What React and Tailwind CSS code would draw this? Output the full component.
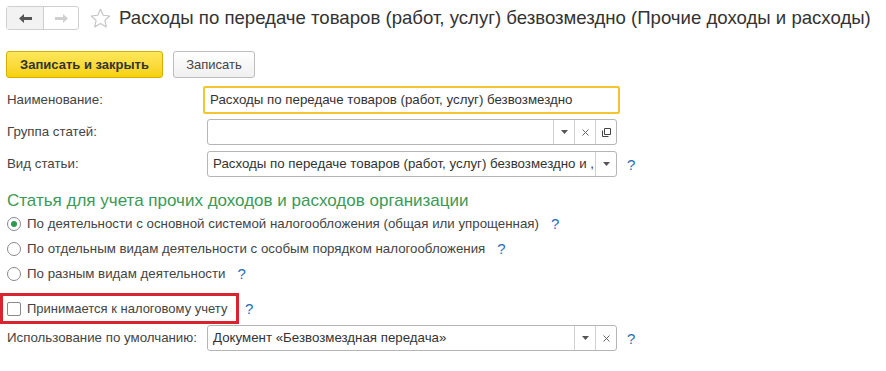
import React from 'react';

const Help = ({ className = '' }) => (
  <span className={`text-[15px] text-[#2a6db5] leading-none ${className}`}>?</span>
);

const Caret = () => (
  <svg width="7" height="4" viewBox="0 0 7 4"><path d="M0 0h7L3.5 4z" fill="#555" /></svg>
);

const Cross = () => (
  <svg width="7" height="7" viewBox="0 0 7 7"><path d="M0.5 0.5l6 6M6.5 0.5l-6 6" stroke="#666" strokeWidth="1" /></svg>
);

const OpenIcon = () => (
  <svg width="11" height="11" viewBox="0 0 11 11" fill="none" stroke="#444" strokeWidth="1">
    <path d="M3.5 1.5h6v6h-6z" />
    <path d="M1.5 3.5v6h6" />
  </svg>
);

function Field({ text = '', buttons = [] }) {
  return (
    <div className="flex h-[26px] w-[410px] rounded-[3px] border border-[#b5b5b5] bg-white">
      <div className="flex-1 overflow-hidden whitespace-nowrap px-[5px] text-[13.3px] leading-[24px] text-[#333]">{text}</div>
      {buttons.map((b, i) => (
        <div key={i} className="flex w-[21px] items-center justify-center border-l border-[#d0d0d0]">
          {b === 'caret' && <Caret />}
          {b === 'x' && <Cross />}
          {b === 'open' && <OpenIcon />}
        </div>
      ))}
    </div>
  );
}

function Radio({ checked, label }) {
  return (
    <div className="flex h-[25px] items-center pl-[7px]">
      <span className="flex h-[14px] w-[14px] items-center justify-center rounded-full border border-[#8a8a8a] bg-white">
        {checked && <span className="h-[6px] w-[6px] rounded-full bg-[#2e9a4f]" />}
      </span>
      <span className="ml-[6px] text-[13.3px] text-[#444]">{label}</span>
      <Help className="ml-[12px]" />
    </div>
  );
}

export default function App() {
  return (
    <div className="h-[371px] w-[886px] overflow-hidden bg-white font-['Liberation_Sans',Arial,sans-serif] text-[#444]">
      {/* header */}
      <div className="flex items-center pl-[6px] pt-[6px]">
        <div className="flex h-[24px] shrink-0 rounded-[3px] border border-[#cfcfcf] bg-white">
          <div className="flex w-[37px] items-center justify-center border-r border-[#cfcfcf] bg-[#f2f2f2]">
            <svg width="13" height="9" viewBox="0 0 13 9"><path d="M0 4.5L5 0v3h8v3H5v3z" fill="#555" /></svg>
          </div>
          <div className="flex w-[34px] items-center justify-center">
            <svg width="13" height="9" viewBox="0 0 13 9"><path d="M13 4.5L8 0v3H0v3h8v3z" fill="#cfcfcf" /></svg>
          </div>
        </div>
        <svg className="ml-[11px] shrink-0" width="21" height="21" viewBox="0 0 20 20">
          <path d="M10 1.2l2.6 5.7 6.2.7-4.6 4.2 1.3 6.2-5.5-3.2-5.5 3.2 1.3-6.2-4.6-4.2 6.2-.7z" fill="none" stroke="#c4c4c4" strokeWidth="1.1" strokeLinejoin="round" />
        </svg>
        <h1 className="ml-[8px] whitespace-nowrap text-[18.6px] leading-[24px] text-[#333]">
          Расходы по передаче товаров (работ, услуг) безвозмездно (Прочие доходы и расходы)
        </h1>
      </div>

      {/* command bar */}
      <div className="mt-[21px] flex gap-[10px] pl-[6px]">
        <button className="h-[27px] w-[157px] rounded-[3px] border border-[#d4b100] bg-gradient-to-b from-[#ffe75a] to-[#f6d100] text-[13px] font-bold text-[#333]">
          Записать и закрыть
        </button>
        <button className="h-[27px] w-[82px] rounded-[3px] border border-[#bdbdbd] bg-gradient-to-b from-white to-[#f0f0f0] text-[13px] text-[#444]">
          Записать
        </button>
      </div>

      {/* fields */}
      <div className="mt-[8px] flex items-center pl-[7px]">
        <span className="w-[196px] text-[13.3px]">Наименование:</span>
        <div className="h-[28px] w-[417px] rounded-[2px] border-2 border-[#f2c62f] bg-white px-[5px] text-[13.3px] leading-[24px] text-[#333]">
          Расходы по передаче товаров (работ, услуг) безвозмездно
        </div>
      </div>
      <div className="mt-[5px] flex items-center pl-[7px]">
        <span className="w-[200px] text-[13.3px]">Группа статей:</span>
        <Field buttons={['caret', 'x', 'open']} />
      </div>
      <div className="mt-[6px] flex items-center pl-[7px]">
        <span className="w-[200px] text-[13.3px]">Вид статьи:</span>
        <Field text="Расходы по передаче товаров (работ, услуг) безвозмездно и ," buttons={['caret']} />
        <Help className="ml-[10px]" />
      </div>

      {/* section */}
      <div className="mt-[14px] pl-[7px] text-[17px] leading-[20px] text-[#3a9a57]">
        Статья для учета прочих доходов и расходов организации
      </div>
      <Radio checked label="По деятельности с основной системой налогообложения (общая или упрощенная)" />
      <Radio label="По отдельным видам деятельности с особым порядком налогообложения" />
      <Radio label="По разным видам деятельности" />

      <div className="mt-[7px] flex items-center">
        <div className="flex h-[31px] w-[239px] items-center border-[3px] border-[#d9232e] pl-[4px]">
          <span className="h-[14px] w-[14px] rounded-[2px] border border-[#8a8a8a] bg-white" />
          <span className="ml-[6px] text-[13px] text-[#444]">Принимается к налоговому учету</span>
        </div>
        <Help className="ml-[6px]" />
      </div>
      <div className="mt-[1px] flex items-center pl-[7px]">
        <span className="w-[200px] text-[13.3px]">Использование по умолчанию:</span>
        <Field text="Документ «Безвозмездная передача»" buttons={['caret', 'x']} />
        <Help className="ml-[10px]" />
      </div>
    </div>
  );
}
